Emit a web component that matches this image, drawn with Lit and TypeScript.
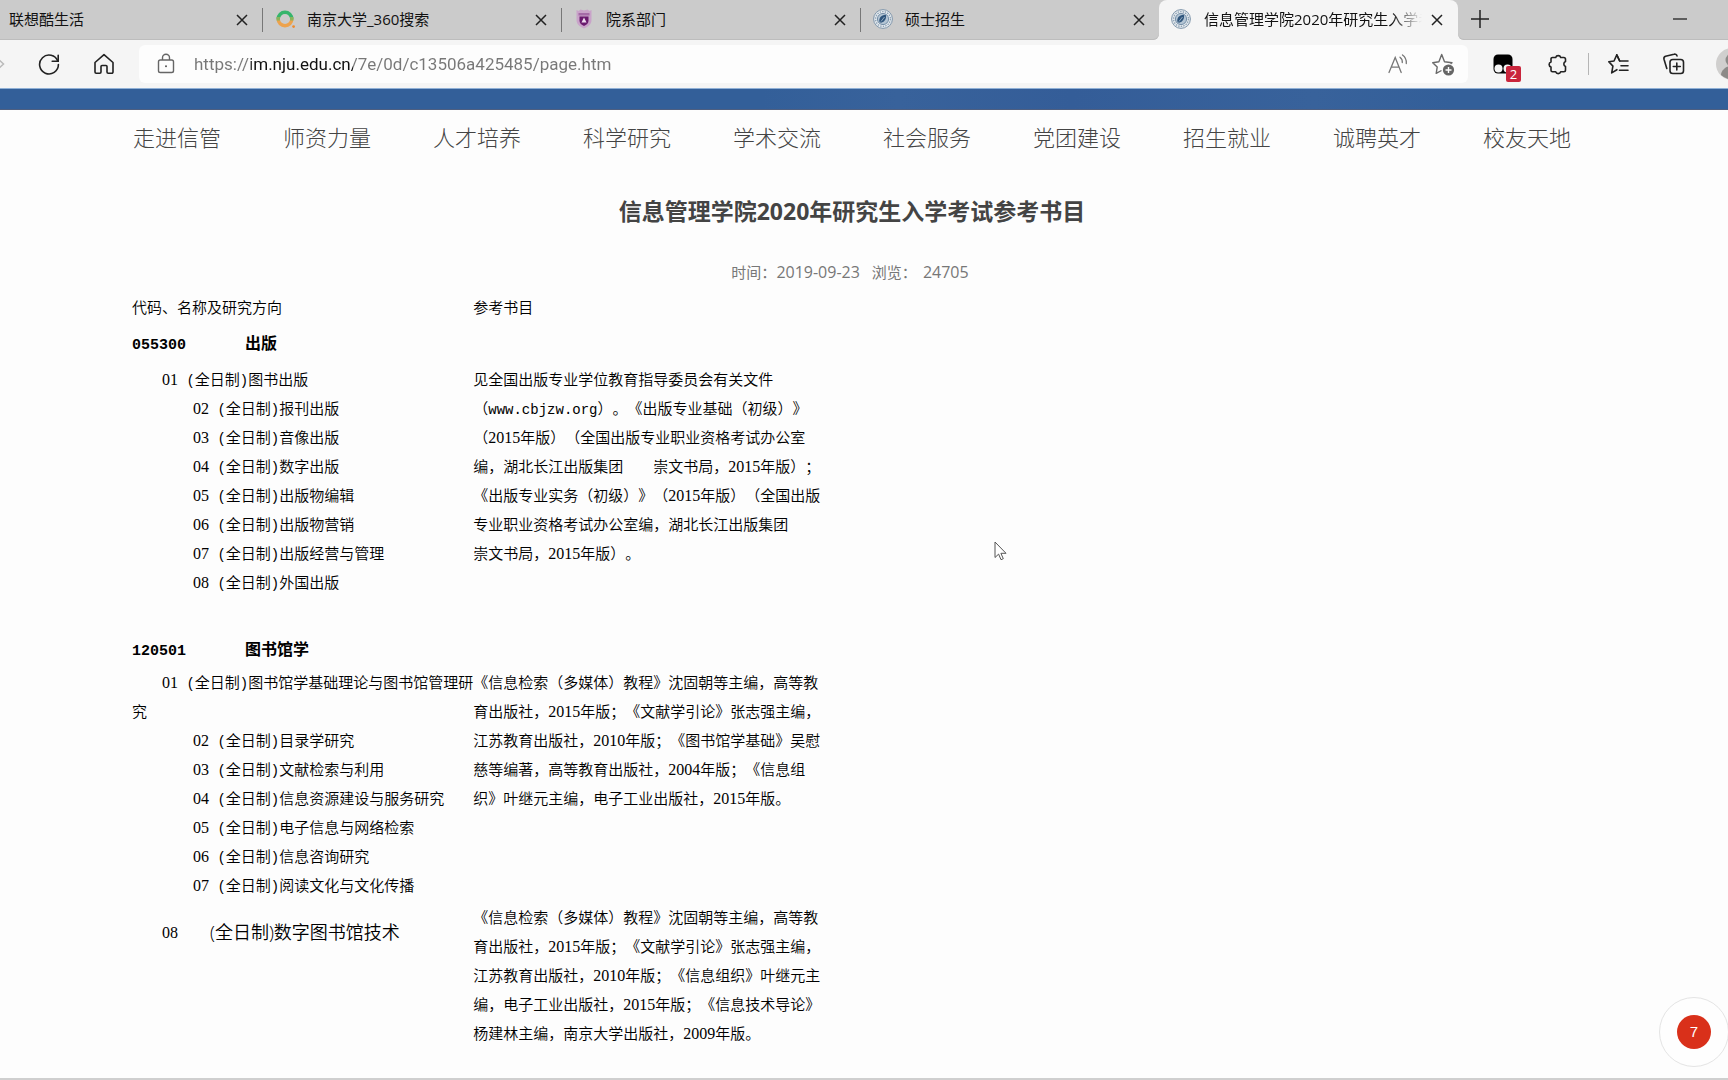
import { LitElement, html, css, svg } from "lit";
import { customElement, property } from "lit/decorators.js";

const NAV = ["走进信管", "师资力量", "人才培养", "科学研究", "学术交流", "社会服务", "党团建设", "招生就业", "诚聘英才", "校友天地"];

interface Block {
  left: string[];
  right: string[];
}

const PUBLISHING: Block = {
  left: [
    "01 (全日制)图书出版",
    "02 (全日制)报刊出版",
    "03 (全日制)音像出版",
    "04 (全日制)数字出版",
    "05 (全日制)出版物编辑",
    "06 (全日制)出版物营销",
    "07 (全日制)出版经营与管理",
    "08 (全日制)外国出版",
  ],
  right: [
    "见全国出版专业学位教育指导委员会有关文件",
    "（www.cbjzw.org）。《出版专业基础（初级）》",
    "（2015年版）（全国出版专业职业资格考试办公室",
    "编，湖北长江出版集团　　崇文书局，2015年版）；",
    "《出版专业实务（初级）》（2015年版）（全国出版",
    "专业职业资格考试办公室编，湖北长江出版集团",
    "崇文书局，2015年版）。",
  ],
};

const LIBRARY: Block = {
  left: [
    "01 (全日制)图书馆学基础理论与图书馆管理研",
    "究",
    "02 (全日制)目录学研究",
    "03 (全日制)文献检索与利用",
    "04 (全日制)信息资源建设与服务研究",
    "05 (全日制)电子信息与网络检索",
    "06 (全日制)信息咨询研究",
    "07 (全日制)阅读文化与文化传播",
  ],
  right: [
    "《信息检索（多媒体）教程》沈固朝等主编，高等教",
    "育出版社，2015年版；《文献学引论》张志强主编，",
    "江苏教育出版社，2010年版；《图书馆学基础》吴慰",
    "慈等编著，高等教育出版社，2004年版；《信息组",
    "织》叶继元主编，电子工业出版社，2015年版。",
  ],
};

const DIGITAL_RIGHT = [
  "《信息检索（多媒体）教程》沈固朝等主编，高等教",
  "育出版社，2015年版；《文献学引论》张志强主编，",
  "江苏教育出版社，2010年版；《信息组织》叶继元主",
  "编，电子工业出版社，2015年版；《信息技术导论》",
  "杨建林主编，南京大学出版社，2009年版。",
];

/* Half-width runs get their own faces: digits in a serif, brackets and Latin in a mono. */
const mixed = (text: string) =>
  text
    .split(/(\d+| ?\(|\)|[a-z.]+)/)
    .filter((part) => part !== "")
    .map((part) =>
      /^\d/.test(part)
        ? html`<span class="num">${part}</span>`
        : /^[ ()a-z.]/.test(part)
          ? html`<span class="half">${part}</span>`
          : part,
    );

const crest = svg`
  <circle cx="10" cy="10" r="9.4" fill="#e6ebef" stroke="#7f95aa" stroke-width="1"/>
  <circle cx="10" cy="10" r="7.400" fill="none" stroke="#8fa3b6" stroke-width="1.400" stroke-dasharray="1.400 1.200"/>
  <circle cx="10" cy="10" r="5.600" fill="#b4c5d4" stroke="#5f7c99" stroke-width=".8"/>
  <path d="M6.500 13c-1-3.500 1.300-7 6.300-7.200 1 3.700-1 7.200-4.800 8z" fill="#2f557c"/>
  <path d="M8 12.500l3.500-4.500" stroke="#9fb4c8" stroke-width=".9"/>`;

const ICONS: Record<string, unknown> = {
  crest,
  search: svg`
    <path d="M3.200 10a6.800 6.800 0 0 1 13.600 0" fill="none" stroke="#35b56c" stroke-width="3.400"/>
    <path d="M3.200 10a6.800 6.800 0 0 0 13.600 0" fill="none" stroke="#eda24c" stroke-width="3.400"/>
    <path d="M3.200 8v3.500" stroke="#8cb35c" stroke-width="3.400"/><path d="M16.800 8v3.500" stroke="#8cb35c" stroke-width="3.400"/>
    <circle cx="18.600" cy="17.600" r="1.400" fill="#f08a2c"/>`,
  shield: svg`
    <path d="M2.500 1l2 1 2-1.500L10 1.500 13.500.5l2 1.500 2-1v10c0 4.500-3.500 6.800-7.500 8.500C6 17.800 2.500 15.500 2.500 11z" fill="#c9a3c9"/>
    <path d="M4.500 4h11v2.500h-11z" fill="#a56ba7"/><path d="M5.500 7.500h9v4c0 3-2 4.300-4.500 5.500-2.500-1.200-4.500-2.500-4.500-5.500z" fill="#6a1a6e"/>
    <path d="M10 8.500l2.500 5h-5z" fill="#eedcef"/>`,
};

@customElement("browser-tab")
export class BrowserTab extends LitElement {
  @property() label = "";
  @property() icon = "";
  @property({ type: Boolean, reflect: true }) active = false;

  static styles = css`
    :host { display: block; min-width: 0; height: 40px; }
    .tab {
      display: flex; align-items: center; height: 40px; box-sizing: border-box;
      padding: 0 10px 2px 12px; gap: 12px;
    }
    .tab.bare { padding-left: 9px; }
    :host([active]) .tab { background: #f5f5f5; border-radius: 8px 8px 0 0; }
    .fav { width: 20px; height: 20px; flex: none; }
    button { border: 0; background: none; padding: 0; margin: 0; color: #111; font: inherit; }
    .title {
      flex: 1; min-width: 0; overflow: hidden; white-space: nowrap; text-align: left;
      font: 15px/24px "Open Sans", "Noto Sans CJK SC", sans-serif;
    }
    :host([active]) .tab { gap: 13px; padding-right: 11px; }
    :host([active]) .title { mask-image: linear-gradient(90deg, #000 86%, transparent); margin-right: -8px; }
    .close { width: 20px; height: 20px; flex: none; margin-top: 2px; }
    .close svg { display: block; }
  `;

  render() {
    return html`<div class="tab ${this.icon ? "" : "bare"}">
      ${this.icon ? html`<svg class="fav" viewBox="0 0 20 20" aria-hidden="true">${ICONS[this.icon]}</svg>` : ""}
      <button class="title" role="tab" aria-selected=${this.active}>${this.label}</button>
      <button class="close" aria-label="关闭">
        <svg width="20" height="20" viewBox="0 0 20 20"><path d="M5 5l10 10M15 5L5 15" stroke="#222" stroke-width="1.500"/></svg>
      </button>
    </div>`;
  }
}

@customElement("browser-chrome")
export class BrowserChrome extends LitElement {
  static styles = css`
    :host { display: block; background: #f5f5f5; }
    .strip { display: flex; height: 40px; }
    .idle { display: flex; background: #cbcbcb; border-radius: 0 0 6px 0; box-shadow: inset 0 -1px #bdbdbd; }
    .idle browser-tab { width: 298px; border-left: 1px solid transparent; position: relative; }
    .idle browser-tab:first-child { width: 262px; border-left: 0; }
    .idle browser-tab + browser-tab::before {
      content: ""; position: absolute; left: -1px; top: 8px; height: 24px; width: 1px; background: #777;
    }
    .current { width: 299px; background: linear-gradient(#cbcbcb 20px, transparent 20px); }
    .rest {
      flex: 1; display: flex; justify-content: space-between; background: #cbcbcb;
      border-radius: 0 0 0 6px; padding: 0 32px 0 6px; box-shadow: inset 0 -1px #bdbdbd;
    }
    button { border: 0; background: none; padding: 0; margin: 0; }
    button svg { display: block; margin: auto; }
    .rest button { width: 32px; height: 38px; }
    .bar { display: flex; align-items: center; height: 48px; box-sizing: border-box; padding-bottom: 1px; overflow: hidden; }
    .fwd { width: 5px; margin-right: 28px; }
    .tool { width: 32px; height: 32px; flex: none; position: relative; }
    .home { margin: 0 19px 0 23px; }
    .address {
      flex: 1; min-width: 0; display: flex; align-items: center; height: 38px;
      background: #fdfdfd; border-radius: 6px; padding: 0 9px 0 11px; box-sizing: border-box;
    }
    .address input {
      flex: 1; min-width: 0; border: 0; outline: 0; padding: 0; margin-left: 12px; height: 30px;
      font: 17px/30px Roboto, "Open Sans", sans-serif;
      color: transparent; background: linear-gradient(90deg, #777 57px, #111 57px, #111 159px, #777 159px);
      background-clip: text; -webkit-background-clip: text;
    }
    .read { margin-right: 13px; }
    .extras { width: 241px; flex: none; display: flex; align-items: center; gap: 23px; padding-left: 19px; }
    .rule { width: 1px; height: 22px; background: #b5b5b5; margin: 0 -9px; flex: none; }
    .badge {
      position: absolute; left: 19px; top: 18px; width: 15px; height: 16px; border-radius: 2px;
      background: #c9253c; color: #fff; font: 13px/16px "Open Sans", sans-serif; text-align: center;
    }
    .avatar { margin-left: 3px; }
  `;

  render() {
    return html`
      <div class="strip" role="tablist">
        <div class="idle">
          <browser-tab label="联想酷生活"></browser-tab>
          <browser-tab label="南京大学_360搜索" icon="search"></browser-tab>
          <browser-tab label="院系部门" icon="shield"></browser-tab>
          <browser-tab label="硕士招生" icon="crest"></browser-tab>
        </div>
        <div class="current"><browser-tab active label="信息管理学院2020年研究生入学考试参考书目" icon="crest"></browser-tab></div>
        <div class="rest">
          <button aria-label="新建标签页"><svg width="18" height="18"><path d="M9 0v18M0 9h18" stroke="#222" stroke-width="1.500"/></svg></button>
          <button aria-label="最小化"><svg width="14" height="2"><path d="M0 1h14" stroke="#222" stroke-width="1.300"/></svg></button>
        </div>
      </div>
      <div class="bar">
        <button class="fwd" aria-label="前进"><svg width="5" height="12"><path d="M-3 0L3.500 6-3 12" fill="none" stroke="#bbb" stroke-width="1.500"/></svg></button>
        <button class="tool" aria-label="刷新">
          <svg width="24" height="24" viewBox="0 0 24 24" fill="none" stroke="#222" stroke-width="1.600" stroke-linecap="round">
            <path d="M20.800 9.200A9.400 9.400 0 1 0 21.400 12.500"/><path d="M21.200 3.200v6h-6"/></svg>
        </button>
        <button class="tool home" aria-label="主页">
          <svg width="24" height="24" viewBox="0 0 24 24" fill="none" stroke="#222" stroke-width="1.600" stroke-linejoin="round">
            <path d="M3 10.500L12 2.600l9 7.900V20a1.200 1.200 0 0 1-1.200 1.200h-3.600A1.200 1.200 0 0 1 15 20v-5.500a1 1 0 0 0-1-1h-4a1 1 0 0 0-1 1V20a1.200 1.200 0 0 1-1.200 1.200H4.200A1.200 1.200 0 0 1 3 20z"/></svg>
        </button>
        <div class="address">
          <button class="tool" aria-label="查看站点信息">
            <svg width="20" height="22" viewBox="0 0 20 22" fill="none" stroke="#666" stroke-width="1.400">
              <rect x="2.500" y="7" width="15" height="12.500" rx="1.800"/><path d="M6.500 7V4.800a3.500 3.500 0 0 1 7 0V7"/><circle cx="10" cy="13.200" r="1" fill="#555" stroke="none"/></svg>
          </button>
          <input type="text" aria-label="地址" value="https://im.nju.edu.cn/7e/0d/c13506a425485/page.htm" spellcheck="false" />
          <button class="tool read" aria-label="大声朗读">
            <svg width="22" height="22" viewBox="0 0 22 22" fill="none" stroke="#777" stroke-width="1.300" stroke-linecap="round">
              <path d="M2 19.500L8.200 4.500l6 15M4.200 14.200h8"/><path d="M13 4.200a6 6 0 0 1 2.300 5.300M15.500 2a9.500 9.500 0 0 1 3.800 8.500"/></svg>
          </button>
          <button class="tool" aria-label="将此页添加到收藏夹">
            <svg width="24" height="24" viewBox="0 0 24 24" fill="none" stroke="#6a6a6a" stroke-width="1.400" stroke-linejoin="round">
              <path d="M10.500 18.500l-5.300 2.800 1-6.200L1.700 10.700l6.200-.9L10.700 2.500l2.800 7.300 7.500.9-1.500 1.400"/>
              <circle cx="17.500" cy="18" r="5.600" fill="#666" stroke="none"/><path d="M17.500 15v6M14.500 18h6" stroke="#fff"/></svg>
          </button>
        </div>
        <div class="extras">
          <button class="tool" aria-label="扩展程序">
            <svg width="22" height="22" viewBox="0 0 22 22"><rect x="1.500" y="1.500" width="19" height="19" rx="4.500" fill="#000"/><circle cx="6.500" cy="15.500" r="4" fill="#f5f5f5"/><circle cx="15.500" cy="15.500" r="4" fill="#f5f5f5"/></svg>
            <span class="badge">2</span>
          </button>
          <button class="tool" aria-label="扩展">
            <svg width="22" height="22" viewBox="0 0 22 22" fill="none" stroke="#222" stroke-width="1.600" stroke-linejoin="round">
              <path d="M5.500 4.500h3.200a2.600 2.600 0 0 1 5 0h3.100a1.700 1.700 0 0 1 1.700 1.700v2.300a2.700 2.700 0 0 0 0 5v3.500a1.700 1.700 0 0 1-1.700 1.700h-3.100a2.600 2.600 0 0 1-5 0H5.500a1.500 1.500 0 0 1-1.500-1.500v-3.200a2.600 2.600 0 0 1 0-5V6a1.500 1.500 0 0 1 1.500-1.500z"/></svg>
          </button>
          <span class="rule"></span>
          <button class="tool" aria-label="收藏夹">
            <svg width="24" height="24" viewBox="0 0 24 24" fill="none" stroke="#222" stroke-width="1.600" stroke-linejoin="round" stroke-linecap="round">
              <path d="M12.700 9L9.800 2.800 7 9l-5.200.8 4.100 4.300-1.200 6.800 5.200-3.200"/><path d="M9.800 2.800L12.700 9H21M14 13.700h7M12.500 18.300H21"/></svg>
          </button>
          <button class="tool" aria-label="集锦">
            <svg width="24" height="24" viewBox="0 0 24 24" fill="none" stroke="#222" stroke-width="1.600" stroke-linejoin="round" stroke-linecap="round">
              <rect x="8" y="7.500" width="13.500" height="14" rx="2.800"/><path d="M14.800 11v7M11.300 14.500h7"/><path d="M4.800 16.500L2 7.200A2.400 2.400 0 0 1 3.600 4.300L12 2.200a2.400 2.400 0 0 1 3 1.700"/></svg>
          </button>
          <button class="tool avatar" aria-label="个人资料">
            <svg width="32" height="32" viewBox="0 0 32 32"><circle cx="16" cy="16" r="16" fill="#d0cfce"/><circle cx="16" cy="12" r="6.500" fill="#8c8a88"/><path d="M5 27a11 9 0 0 1 22 0 16 16 0 0 1-22 0z" fill="#8c8a88"/></svg>
          </button>
        </div>
      </div>
    `;
  }
}

@customElement("app-root")
export class AppRoot extends LitElement {
  static styles = css`
    :host {
      display: flex; flex-direction: column; min-height: 100vh; box-sizing: border-box; position: relative;
      overflow: hidden; background: #fdfdfd; border-bottom: 2px solid #cfcfcf;
      font-family: "Open Sans", "Noto Sans CJK SC", sans-serif; text-spacing-trim: space-all;
    }
    .banner {
      height: 22px; box-sizing: border-box; border-top: 1px solid #8fb0d6; border-bottom: 1px solid #4f5f80;
      background: linear-gradient(90deg, #335f99 44%, #38629b 52%, #345d98 62%, #38629b 76%, #335f99 84%);
    }
    .page { padding: 0 126px 0 102px; }
    nav { display: grid; grid-template-columns: repeat(10, 1fr); height: 54px; align-items: center; }
    nav a { color: #444; text-decoration: none; text-align: center; font-size: 22px; line-height: 32px; font-weight: 300; white-space: nowrap; }
    h1 { margin: 29px 0 0; text-align: center; color: #444; font-size: 23px; line-height: 36px; font-weight: 700; }
    .meta { margin: 30px 0 0; display: flex; justify-content: center; gap: 12px; padding-right: 4px; color: #777; font-size: 15px; line-height: 26px; }
    .meta b { font-weight: 400; font-size: 16px; line-height: 24px; }
    .meta .count { padding-left: 6px; }
    table { margin: 7px 0 16px 30px; border-collapse: collapse; color: #000; font: 15px/29px "Noto Sans CJK SC", sans-serif; font-weight: 350; }
    th, td { padding: 0; text-align: left; vertical-align: top; white-space: nowrap; font-weight: inherit; }
    th:first-child, td:first-child { width: 341px; }
    .head th { padding-bottom: 7px; }
    .code th { padding-bottom: 4px; font-size: 16px; font-weight: 700; }
    .code.near th { padding-bottom: 1px; }
    .code span { display: inline-block; width: 113px; font: bold 15px/29px "Liberation Mono", monospace; }
    .open td { padding-bottom: 38px; }
    .tight td { padding-bottom: 3px; }
    .line { display: block; padding-left: 61px; }
    .line.first { padding-left: 30px; }
    .line.wrap { padding-left: 0; }
    .ref { display: block; }
    .num { font-family: "Liberation Serif", serif; font-size: 16px; line-height: 0; font-weight: 400; }
    .half { font-family: "Liberation Mono", monospace; font-size: 14px; line-height: 0; white-space: pre; font-weight: 400; }
    .single { display: flex; gap: 32px; padding: 16px 0 0 30px; }
    .single .big { font-size: 18px; font-family: "Open Sans", "Noto Sans CJK SC", sans-serif; }
    .single .num { line-height: 29px; }
    .float {
      position: absolute; right: -1px; bottom: 11px; width: 70px; height: 70px; box-sizing: border-box; padding: 0;
      display: grid; place-items: center; border: 1px solid #e4e4e4; border-radius: 50%; background: #fefefe;
    }
    .float span { width: 34px; height: 34px; border-radius: 50%; background: #d9301a; color: #fff; font: 15px/34px "Liberation Sans", sans-serif; }
    .pointer { position: absolute; left: 994px; top: 541px; }
  `;

  private block(b: Block, cls: string) {
    return html`<tr class=${cls}>
      <td>${b.left.map((t, i) => html`<span class="line ${i === 0 ? "first" : /^\d/.test(t) ? "" : "wrap"}">${mixed(t)}</span>`)}</td>
      <td>${b.right.map((t) => html`<span class="ref">${mixed(t)}</span>`)}</td>
    </tr>`;
  }

  render() {
    return html`
      <browser-chrome></browser-chrome>
      <div class="banner"></div>
      <main class="page">
        <nav>${NAV.map((n) => html`<a href="#">${n}</a>`)}</nav>
        <h1>信息管理学院2020年研究生入学考试参考书目</h1>
        <p class="meta"><span>时间：<b>2019-09-23</b></span><span>浏览：<b class="count">24705</b></span></p>
        <table>
          <tr class="head"><th>代码、名称及研究方向</th><th>参考书目</th></tr>
          <tr class="code"><th colspan="2"><span>055300</span>出版</th></tr>
          ${this.block(PUBLISHING, "open")}
          <tr class="code near"><th colspan="2"><span>120501</span>图书馆学</th></tr>
          ${this.block(LIBRARY, "tight")}
          <tr>
            <td><div class="single"><span class="num">08</span><span class="big">(全日制)数字图书馆技术</span></div></td>
            <td>${DIGITAL_RIGHT.map((t) => html`<span class="ref">${mixed(t)}</span>`)}</td>
          </tr>
        </table>
      </main>
      <button class="float" aria-label="消息"><span>7</span></button>
      <svg class="pointer" width="13" height="20" viewBox="0 0 13 20" aria-hidden="true">
        <path d="M1 1v15.500l3.600-3.400 2.400 5.600 2.300-1-2.400-5.400H12z" fill="#fff" stroke="#555" stroke-width="1"/>
      </svg>
    `;
  }
}
